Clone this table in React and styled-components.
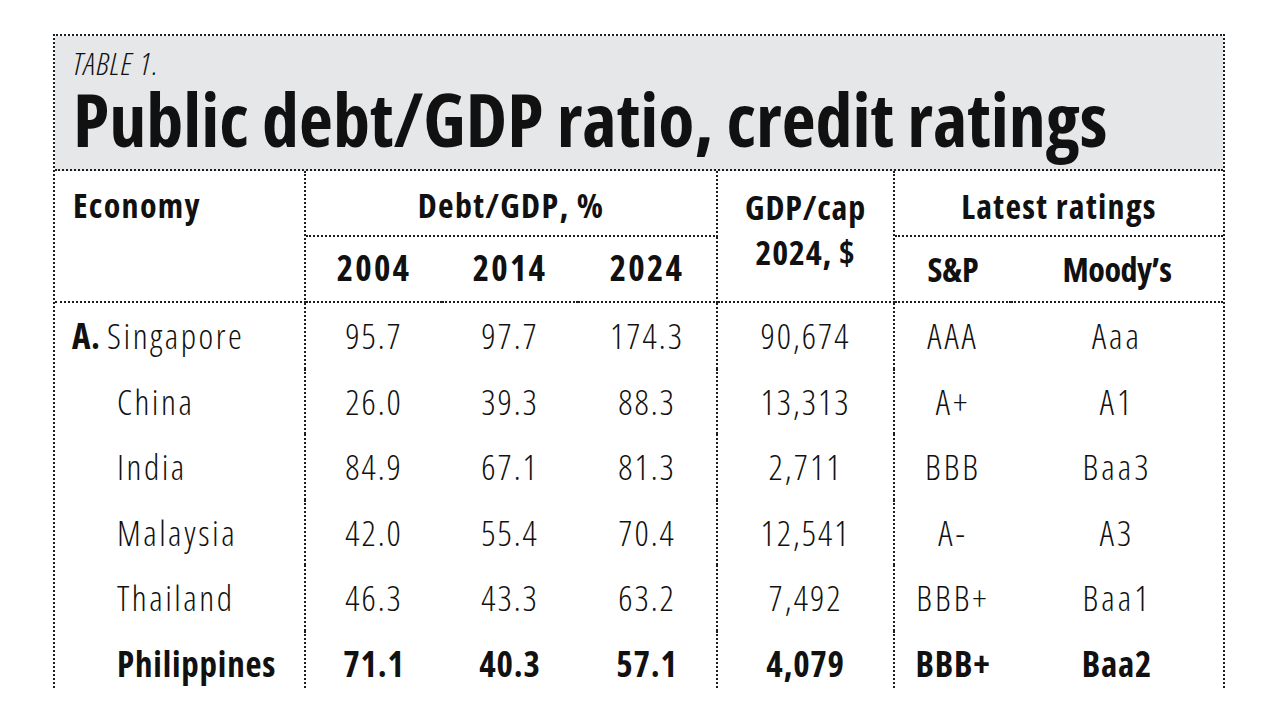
import React from 'react';
import styled, { createGlobalStyle } from 'styled-components';

const LINE = '2px dotted #1d1d1d';

const GlobalStyle = createGlobalStyle`
  body {
    margin: 0;
    background: #fff;
  }
`;

const Frame = styled.section`
  margin: 34px 0 0 53px;
  width: 1172px;
  box-sizing: border-box;
  border: ${LINE};
  border-bottom: none;
  color: #111;
  font-family: "Open Sans", sans-serif;
  font-stretch: 75%;
`;

const TitleBlock = styled.header`
  background: #e6e7e9;
  padding: 10px 18px 11px;
  border-bottom: ${LINE};
`;

const Kicker = styled.div`
  font-size: 32px;
  line-height: 34px;
  font-style: italic;
  font-weight: 300;
  letter-spacing: 1px;
`;

const Title = styled.h1`
  margin: 0;
  font-size: 74px;
  line-height: 78px;
  font-weight: 700;
  white-space: nowrap;
`;

const Grid = styled.div`
  display: grid;
  grid-template-columns: 251px 136px 136px 140px 177px 116px 1fr;
  grid-template-rows: 66px 66px repeat(5, 65.5px) 57px;
`;

const HeadCell = styled.div`
  grid-column: ${(p) => p.$col};
  grid-row: ${(p) => p.$row};
  box-sizing: border-box;
  padding: ${(p) => p.$pad || '14px 0 0'};
  padding-left: ${(p) => (p.$align === 'left' ? '18px' : '0')};
  text-align: ${(p) => p.$align || 'center'};
  font-size: ${(p) => (p.$sub ? 35 : 34)}px;
  line-height: ${(p) => p.$lh || '40px'};
  font-weight: 700;
  letter-spacing: ${(p) => p.$track ?? 1.3}px;
  white-space: nowrap;
  border-right: ${(p) => (p.$right ? LINE : 'none')};
  border-bottom: ${(p) => (p.$bottom ? LINE : 'none')};
`;

const tracking = { name: 2.5, num: 2, rating: 3 };

const Cell = styled.div`
  box-sizing: border-box;
  padding-top: 7px;
  padding-left: ${(p) => p.$indent || 0}px;
  text-align: ${(p) => (p.$kind === 'name' ? 'left' : 'center')};
  font-size: 35px;
  line-height: 52px;
  font-weight: ${(p) => (p.$bold ? 700 : 300)};
  letter-spacing: ${(p) => (p.$bold ? 0.8 : tracking[p.$kind])}px;
  white-space: nowrap;
  border-right: ${(p) => (p.$right ? LINE : 'none')};
`;

const Marker = styled.b`
  font-weight: 700;
  letter-spacing: 0.5px;
`;

const rows = [
  { name: 'Singapore', marker: 'A.', v: ['95.7', '97.7', '174.3', '90,674', 'AAA', 'Aaa'] },
  { name: 'China', v: ['26.0', '39.3', '88.3', '13,313', 'A+', 'A1'] },
  { name: 'India', v: ['84.9', '67.1', '81.3', '2,711', 'BBB', 'Baa3'] },
  { name: 'Malaysia', v: ['42.0', '55.4', '70.4', '12,541', 'A-', 'A3'] },
  { name: 'Thailand', v: ['46.3', '43.3', '63.2', '7,492', 'BBB+', 'Baa1'] },
  { name: 'Philippines', bold: true, v: ['71.1', '40.3', '57.1', '4,079', 'BBB+', 'Baa2'] },
];

// value columns followed by a vertical rule (2024 and GDP/cap)
const ruled = [2, 3];

export default function App() {
  return (
    <>
      <GlobalStyle />
      <Frame>
        <TitleBlock>
          <Kicker>TABLE 1.</Kicker>
          <Title>Public debt/GDP ratio, credit ratings</Title>
        </TitleBlock>
        <Grid>
          <HeadCell $col="1" $row="1 / span 2" $align="left" $right $bottom>
            Economy
          </HeadCell>
          <HeadCell $col="2 / span 3" $row="1" $right $bottom>
            Debt/GDP, %
          </HeadCell>
          <HeadCell $col="2" $row="2" $sub $track={2.2} $pad="11px 0 0" $bottom>2004</HeadCell>
          <HeadCell $col="3" $row="2" $sub $track={2.2} $pad="11px 0 0" $bottom>2014</HeadCell>
          <HeadCell $col="4" $row="2" $sub $track={2.2} $pad="11px 0 0" $right $bottom>2024</HeadCell>
          <HeadCell $col="5" $row="1 / span 2" $track={0.8} $pad="14px 0 0" $lh="45px" $right $bottom>
            GDP/cap
            <br />
            2024, $
          </HeadCell>
          <HeadCell $col="6 / span 2" $row="1" $pad="15px 0 0" $bottom>
            Latest ratings
          </HeadCell>
          <HeadCell $col="6" $row="2" $track={0} $pad="12px 0 0" $bottom>S&amp;P</HeadCell>
          <HeadCell $col="7" $row="2" $track={-0.5} $pad="12px 0 0" $bottom>Moody’s</HeadCell>

          {rows.map((r) => (
            <React.Fragment key={r.name}>
              <Cell $kind="name" $indent={r.marker ? 17 : 62} $bold={r.bold} $right>
                {r.marker && <Marker>{r.marker} </Marker>}
                {r.name}
              </Cell>
              {r.v.map((val, i) => (
                <Cell
                  key={i}
                  $kind={i > 3 ? 'rating' : 'num'}
                  $bold={r.bold}
                  $right={ruled.includes(i)}
                >
                  {val}
                </Cell>
              ))}
            </React.Fragment>
          ))}
        </Grid>
      </Frame>
    </>
  );
}
